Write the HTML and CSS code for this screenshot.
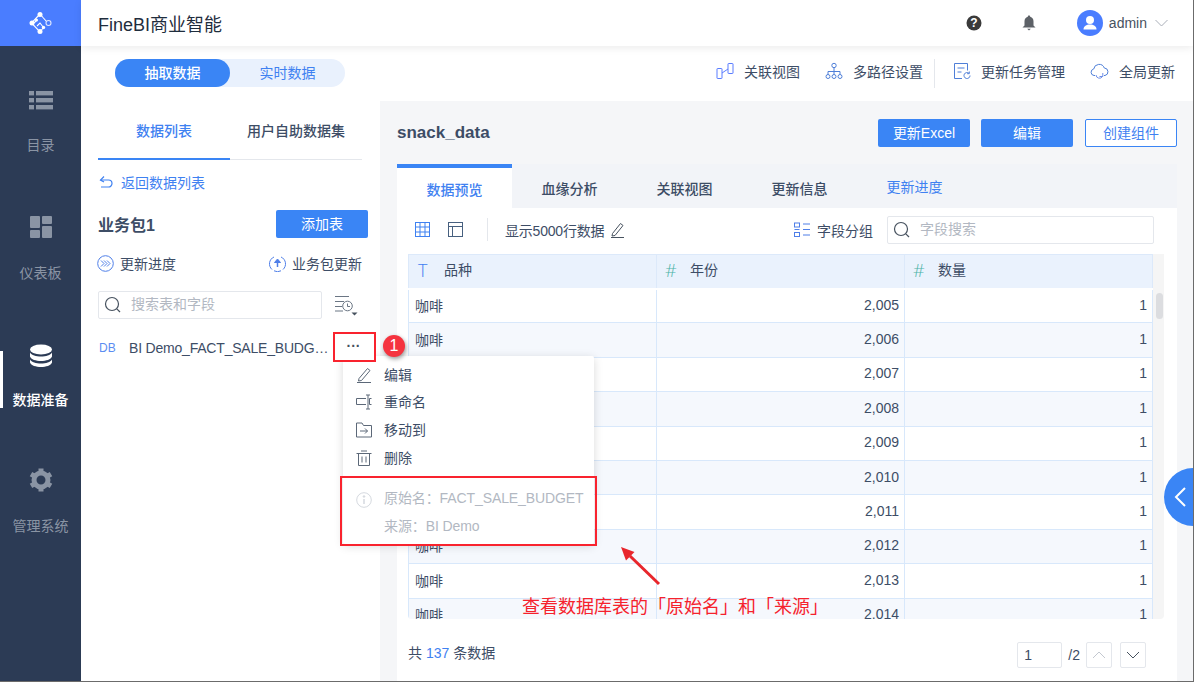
FILE: index.html
```html
<!DOCTYPE html>
<html>
<head>
  <meta charset="utf-8">
  <title>FineBI商业智能</title>
  <link rel="stylesheet" href="styles.css">
</head>
<body>
<div class="app">

  <div class="sidebar">
    <div class="logo">
      <svg width="24" height="24" viewBox="0 0 24 24" fill="none" stroke="#fff" stroke-width="1.100">
        <path d="M11 3L2.500 12 11 21l3.500-4.500M11 3l3 3.500M5 12l3-3M8 15l3-3 3.500 4.500M14 6.500l3.500 4"/>
        <g fill="#fff" stroke="none">
          <circle cx="11" cy="3.500" r="2.500"/><circle cx="3" cy="12" r="2.500"/><circle cx="11" cy="20.500" r="2.500"/>
          <circle cx="7.500" cy="9" r="1.500"/><circle cx="14.500" cy="16.500" r="1.700"/>
        </g>
        <circle cx="19.500" cy="12" r="2.500" stroke="#dfe7ff"/>
      </svg>
    </div>
    <div class="nav-item">
      <svg width="24" height="20" viewBox="0 0 24 20" fill="#8a94a4">
        <rect x="0" y="1" width="5" height="4.400"/><rect x="7" y="1" width="17" height="4.400"/>
        <rect x="0" y="8" width="5" height="4.400"/><rect x="7" y="8" width="17" height="4.400"/>
        <rect x="0" y="15" width="5" height="4.400"/><rect x="7" y="15" width="17" height="4.400"/>
      </svg>
      <span>目录</span>
    </div>
    <div class="nav-item">
      <svg width="22" height="22" viewBox="0 0 22 22" fill="#8a94a4">
        <rect x="0" y="0" width="10" height="12" rx="1"/><rect x="12" y="0" width="10" height="8" rx="1"/>
        <rect x="0" y="14" width="10" height="8" rx="1"/><rect x="12" y="10" width="10" height="12" rx="1"/>
      </svg>
      <span>仪表板</span>
    </div>
    <div class="nav-item active">
      <svg width="24" height="24" viewBox="0 0 24 24" fill="#fff">
        <ellipse cx="12" cy="5.500" rx="11" ry="5"/>
        <path d="M1 8.500c1.500 2.700 6 4 11 4s9.500-1.300 11-4v4c-1 3-6 4.500-11 4.500S2 15.500 1 12.500z"/>
        <path d="M1 15.500c1.500 2.700 6 4 11 4s9.500-1.300 11-4v3c-1 3-6 4.500-11 4.500S2 21.500 1 18.500z"/>
      </svg>
      <span>数据准备</span>
    </div>
    <div class="nav-item">
      <svg width="24" height="24" viewBox="0 0 24 24" fill="none" stroke="#8a94a4">
        <circle cx="12" cy="12" r="7" stroke-width="5"/>
        <path d="M12 0.500v4M12 19.500v4M2 6.200l3.500 2M18.500 15.800l3.500 2M2 17.800l3.500-2M18.500 8.200l3.500-2" stroke-width="5"/>
      </svg>
      <span>管理系统</span>
    </div>
  </div>

  <div class="main">
    <div class="topbar">
      <div class="brand">FineBI商业智能</div>
      <div class="top-right">
        <svg class="help" width="16" height="16" viewBox="0 0 16 16">
          <circle cx="8" cy="8" r="7.500" fill="#3a3a3a"/>
          <text x="8" y="12" class="help-mark">?</text>
        </svg>
        <svg class="bell" width="14" height="16" viewBox="0 0 14 16" fill="#5d6167">
          <path d="M7 0.500c.8 0 1.200.5 1.200 1.200C10.500 2.300 11.500 4 11.500 6.500v4l2 2H.5l2-2v-4C2.500 4 3.500 2.300 5.800 1.700 5.800 1 6.200.5 7 .5z"/>
          <path d="M5.200 13.800h3.600L7 15.500z"/>
        </svg>
        <svg class="avatar" width="26" height="26" viewBox="0 0 26 26">
          <circle cx="13" cy="13" r="13" fill="#4a7dff"/>
          <circle cx="13" cy="10" r="4" fill="#fff"/>
          <path d="M6.500 19.500c0-3.500 3-5 6.500-5s6.500 1.500 6.500 5z" fill="#fff"/>
        </svg>
        <span class="user-name">admin</span>
        <svg class="user-caret" width="13" height="8" viewBox="0 0 13 8" fill="none" stroke="#a9aeb8"><path d="M.5 1l6 6 6-6"/></svg>
      </div>
    </div>

    <div class="subbar">
      <div class="switch">
        <div class="switch-on">抽取数据</div>
        <div class="switch-off">实时数据</div>
      </div>
      <div class="actions">
        <div class="action a-view">
          <svg width="18" height="18" viewBox="0 0 18 18" fill="none" stroke="#5a7dff">
            <rect x="1" y="6.500" width="5" height="10" rx=".5"/><rect x="12" y="1.500" width="5" height="10" rx=".5"/><path d="M6 11L12 7"/>
          </svg>
          <span>关联视图</span>
        </div>
        <div class="action a-path">
          <svg width="18" height="18" viewBox="0 0 18 18" fill="none" stroke="#4f7fd8">
            <circle cx="9" cy="3.500" r="2.200"/><circle cx="3" cy="14.500" r="2"/><circle cx="9" cy="14.500" r="2"/><circle cx="15" cy="14.500" r="2"/>
            <path d="M9 5.700v6.800M3 12.500V9.500h12v3"/>
          </svg>
          <span>多路径设置</span>
        </div>
        <div class="action-sep"></div>
        <div class="action a-task">
          <svg width="18" height="18" viewBox="0 0 18 18" fill="none" stroke="#4f7fd8">
            <path d="M9 16.500H1.500v-15h13v7"/><path d="M4.500 6h7M4.500 10h4"/>
            <path d="M17 13.500a3 3 0 1 1-1-2.200M16.300 9.500v2.200h-2.200"/>
          </svg>
          <span>更新任务管理</span>
        </div>
        <div class="action a-cloud">
          <svg width="19" height="18" viewBox="0 0 19 18" fill="none" stroke="#4f7fd8">
            <path d="M5 13.500H4A3.300 3.300 0 0 1 3.700 7 5.500 5.500 0 0 1 14.300 6 3.800 3.800 0 0 1 15 13.500h-1"/>
            <path d="M6 13a3.500 3.500 0 0 0 6.500 1.500M12.800 11v3.500H9.500" stroke="#6f8fe8"/>
          </svg>
          <span>全局更新</span>
        </div>
      </div>
    </div>

    <div class="content">
      <div class="left">
        <div class="left-tabs">
          <div class="left-tab on">数据列表</div>
          <div class="left-tab">用户自助数据集</div>
        </div>
        <div class="back">
          <svg width="16" height="14" viewBox="0 0 16 14" fill="none" stroke="#3f81f1" stroke-width="1.200">
            <path d="M2.500 5h8a3.500 3.500 0 0 1 0 7H3"/><path d="M6 1.500L2.500 5 6 7" />
          </svg>
          <span>返回数据列表</span>
        </div>
        <div class="pack-head">
          <span class="pack-name">业务包1</span>
          <div class="btn btn-add">添加表</div>
        </div>
        <div class="pack-links">
          <div class="pack-link">
            <svg width="17" height="17" viewBox="0 0 17 17" fill="none" stroke="#4f7fe8">
              <circle cx="8.500" cy="8.500" r="7.800"/><path d="M4 5.500l3 3-3 3M7 5.500l3 3-3 3M10 5.500l3 3-3 3"/>
            </svg>
            <span>更新进度</span>
          </div>
          <div class="pack-link">
            <svg width="17" height="17" viewBox="0 0 17 17" fill="none" stroke="#4f7fe8">
              <path d="M5 2A7.500 7.500 0 0 0 3 14.500M12 2a7.500 7.500 0 0 1 2 12.500M5 15.800a7.500 7.500 0 0 0 7 0"/>
              <path d="M8.500 12V5" stroke-width="1.500"/><path d="M5.500 7.500L8.500 4l3 3.500z" fill="#4f7fe8"/>
            </svg>
            <span>业务包更新</span>
          </div>
        </div>
        <div class="search-row">
          <div class="search search-left">
            <svg width="18" height="18" viewBox="0 0 18 18" fill="none" stroke="#47525f" stroke-width="1.200">
              <circle cx="8" cy="8" r="6.500"/><path d="M12.800 12.800L16 16"/>
            </svg>
            <span>搜索表和字段</span>
          </div>
          <svg class="sort" width="24" height="24" viewBox="0 0 24 24" fill="none" stroke="#6b7684">
            <path d="M1 3.500h14M1 8.500h9M1 13.500h7M1 18h8"/>
            <circle cx="13.500" cy="13" r="4.800"/><path d="M13.500 10.500V13.500h2.500"/>
            <path d="M17.500 19.500h6l-3 3z" fill="#47525f" stroke="none"/>
          </svg>
        </div>
        <div class="table-item">
          <span class="db-tag">DB</span>
          <span class="table-name">BI Demo_FACT_SALE_BUDGET</span>
        </div>
      </div>

      <div class="right">
        <div class="right-head">
          <div class="ds-name">snack_data</div>
          <div class="right-btns">
            <div class="btn">更新Excel</div>
            <div class="btn">编辑</div>
            <div class="btn btn-line">创建组件</div>
          </div>
        </div>
        <div class="card">
          <div class="tabs">
            <div class="tab on">数据预览</div>
            <div class="tab">血缘分析</div>
            <div class="tab">关联视图</div>
            <div class="tab">更新信息</div>
            <div class="tab plain">更新进度</div>
          </div>
          <div class="toolbar">
            <svg class="tool-grid" width="15" height="15" viewBox="0 0 15 15" fill="none" stroke="#3f81f1">
              <rect x=".5" y=".5" width="14" height="14"/><path d="M.5 5h14M.5 10h14M5 .5v14M10 .5v14"/>
            </svg>
            <svg class="tool-layout" width="15" height="15" viewBox="0 0 15 15" fill="none" stroke="#47607f">
              <rect x=".5" y=".5" width="14" height="14"/><path d="M.5 4.500h14M4.500 4.500v10"/>
            </svg>
            <div class="tool-sep"></div>
            <span class="tool-text">显示5000行数据</span>
            <svg class="tool-pen" width="15" height="16" viewBox="0 0 15 16" fill="none" stroke="#47525f">
              <path d="M2.500 11.500L10.500 1.500l2.500 2-8 10-3 .5zM1 15.500h13"/>
            </svg>
            <div class="tool-right">
              <svg width="16" height="16" viewBox="0 0 16 16" fill="none" stroke="#4f7fe8">
                <rect x=".5" y="1" width="5" height="4"/><rect x=".5" y="10.500" width="5" height="4"/>
                <path d="M9 2h7M9 7.500h7M9 13h7M.5 7.500h5"/>
              </svg>
              <span>字段分组</span>
              <div class="search search-field">
                <svg width="18" height="18" viewBox="0 0 18 18" fill="none" stroke="#47525f" stroke-width="1.200">
                  <circle cx="8" cy="8" r="6.500"/><path d="M12.800 12.800L16 16"/>
                </svg>
                <span>字段搜索</span>
              </div>
            </div>
          </div>

          <div class="table-wrap">
            <table class="data">
              <thead>
                <tr>
                  <th><i class="type t-text">T</i>品种</th>
                  <th><i class="type t-num">#</i>年份</th>
                  <th><i class="type t-num">#</i>数量</th>
                </tr>
              </thead>
              <tbody>
                <tr><td>咖啡</td><td class="num">2,005</td><td class="num">1</td></tr>
                <tr><td>咖啡</td><td class="num">2,006</td><td class="num">1</td></tr>
                <tr><td>咖啡</td><td class="num">2,007</td><td class="num">1</td></tr>
                <tr><td>咖啡</td><td class="num">2,008</td><td class="num">1</td></tr>
                <tr><td>咖啡</td><td class="num">2,009</td><td class="num">1</td></tr>
                <tr><td>咖啡</td><td class="num">2,010</td><td class="num">1</td></tr>
                <tr><td>咖啡</td><td class="num">2,011</td><td class="num">1</td></tr>
                <tr><td>咖啡</td><td class="num">2,012</td><td class="num">1</td></tr>
                <tr><td>咖啡</td><td class="num">2,013</td><td class="num">1</td></tr>
                <tr><td>咖啡</td><td class="num">2,014</td><td class="num">1</td></tr>
              </tbody>
            </table>
            <div class="scroll"><div class="thumb"></div></div>
          </div>

          <div class="foot">
            <span class="foot-count">共 <b>137</b> 条数据</span>
            <div class="pager">
              <div class="page-input">1</div>
              <span class="page-total">/2</span>
              <div class="page-btn">
                <svg width="14" height="8" viewBox="0 0 14 8" fill="none" stroke="#c3c8d0"><path d="M1 7l6-6 6 6"/></svg>
              </div>
              <div class="page-btn">
                <svg width="14" height="8" viewBox="0 0 14 8" fill="none" stroke="#47525f"><path d="M1 1l6 6 6-6"/></svg>
              </div>
            </div>
          </div>
        </div>
      </div>
    </div>
  </div>

  <!-- popup menu -->
  <div class="menu">
    <div class="menu-item">
      <svg width="16" height="16" viewBox="0 0 16 16" fill="none" stroke="#5c6878"><path d="M3 11.500L11.500 1.500l2.500 2-8.500 10-3 .5zM1 15.500h14"/></svg>
      <span>编辑</span>
    </div>
    <div class="menu-item">
      <svg width="16" height="16" viewBox="0 0 16 16" fill="none" stroke="#5c6878"><path d="M10 4.500H.5v6H10M15.500 4.500h-2v6h2M12 1v14M10 1h4M10 15h4"/></svg>
      <span>重命名</span>
    </div>
    <div class="menu-item">
      <svg width="16" height="16" viewBox="0 0 16 16" fill="none" stroke="#5c6878"><path d="M.5 1h5.500l1.500 2.500h8v11.500H.5zM4 9h7.500M9 6.500L11.500 9 9 11.500"/></svg>
      <span>移动到</span>
    </div>
    <div class="menu-item">
      <svg width="16" height="16" viewBox="0 0 16 16" fill="none" stroke="#5c6878"><path d="M.5 3.500h15M5 1h6M2.500 3.500v12h11v-12M6 6.500v6M10 6.500v6"/></svg>
      <span>删除</span>
    </div>
    <div class="menu-info">
      <svg width="16" height="16" viewBox="0 0 16 16" fill="none" stroke="#d5d9df"><circle cx="8" cy="8" r="7.300"/><path d="M8 7v5" stroke-width="1.500"/><circle cx="8" cy="4.500" r=".8" fill="#d5d9df"/></svg>
      <div class="info-lines">
        <div>原始名：FACT_SALE_BUDGET</div>
        <div>来源：BI Demo</div>
      </div>
    </div>
  </div>

  <!-- annotations drawn on top of the screenshot -->
  <div class="mark mark-more"><span class="dots">···</span></div>
  <div class="badge">1</div>
  <div class="mark mark-info"></div>
  <svg class="arrow" width="50" height="50" viewBox="0 0 50 50">
    <path d="M14 16 L43 44" stroke="#e8262c" stroke-width="3"/>
    <path d="M5 7 L10 20.500 L18.500 12z" fill="#e8262c"/>
  </svg>
  <div class="note">查看数据库表的「原始名」和「来源」</div>
  <div class="collapse">
    <svg width="14" height="22" viewBox="0 0 14 22" fill="none" stroke="#fff" stroke-width="2"><path d="M12 2L3 11l9 9"/></svg>
  </div>
</div>
</body>
</html>
```

FILE: styles.css
```css
* {
  box-sizing: border-box;
}
html, body {
  margin: 0;
  padding: 0;
}
body {
  font-family: "Liberation Sans", "Noto Sans CJK SC", sans-serif;
  font-size: 14px;
  color: #3d4d66;
  background: #fff;
}
.app {
  position: relative;
  display: flex;
  width: 1194px;
  height: 682px;
  overflow: hidden;
  border-right: 1px solid #6b6b6b;
  border-bottom: 1px solid #6b6b6b;
}

/* sidebar */
.sidebar {
  width: 81px;
  flex: none;
  background: #2c3b55;
}
.logo {
  height: 46px;
  margin-bottom: 13px;
  background: #4a7dff;
  display: flex;
  align-items: center;
  justify-content: center;
}
.nav-item {
  height: 127px;
  display: flex;
  flex-direction: column;
  align-items: center;
  justify-content: center;
  gap: 25px;
  color: #8a94a4;
  position: relative;
}
.nav-item:last-child {
  gap: 24px;
  padding-bottom: 3px;
}
.nav-item span {
  line-height: 20px;
}
.nav-item.active {
  gap: 22px;
  color: #fff;
  font-weight: 500;
}
.nav-item.active::before {
  content: "";
  position: absolute;
  left: 0;
  top: 38px;
  width: 3px;
  height: 57px;
  background: #fff;
}

/* header */
.main {
  flex: 1;
  min-width: 0;
  display: flex;
  flex-direction: column;
}
.topbar {
  height: 46px;
  flex: none;
  display: flex;
  align-items: center;
  justify-content: space-between;
  padding: 0 25px 0 17px;
  box-shadow: 0 2px 8px rgba(0,0,0,0.08);
  position: relative;
}
.brand {
  font-size: 18px;
  color: #1f2d3d;
}
.top-right {
  display: flex;
  align-items: center;
}
.bell {
  margin-left: 40px;
}
.avatar {
  margin-left: 41px;
}
.help-mark {
  font-size: 12px;
  font-weight: bold;
  fill: #fff;
  text-anchor: middle;
}
.user-name {
  margin-left: 6px;
  font-size: 14px;
  color: #47525f;
}
.user-caret {
  margin-left: 8px;
}

/* second bar */
.subbar {
  height: 55px;
  flex: none;
  display: flex;
  align-items: center;
  justify-content: space-between;
  padding: 0 18px 0 34px;
}
.switch {
  width: 230px;
  height: 28px;
  margin-top: -1px;
  display: flex;
  border-radius: 14px;
  background: #e9f1fd;
  line-height: 28px;
  text-align: center;
}
.switch-on {
  width: 115px;
  border-radius: 14px;
  background: #3a85f5;
  color: #fff;
  font-weight: 500;
}
.switch-off {
  flex: 1;
  color: #3f81f1;
}
.actions {
  display: flex;
  align-items: center;
  color: #3d4d66;
}
.action {
  display: flex;
  align-items: center;
  gap: 10px;
  margin-bottom: 6px;
}
.action.a-path {
  margin-left: 25px;
}
.action.a-task {
  margin-left: 18px;
}
.action.a-cloud {
  margin-left: 25px;
}
.action-sep {
  width: 1px;
  height: 29px;
  margin-left: 11px;
  background: #e4e7ec;
}

/* content */
.content {
  flex: 1;
  min-height: 0;
  display: flex;
}
.left {
  width: 299px;
  flex: none;
  padding: 14px 12px 0 17px;
}
.left-tabs {
  width: 264px;
  height: 45px;
  display: flex;
  border-bottom: 1px solid #e4e7ec;
}
.left-tab {
  width: 132px;
  height: 45px;
  line-height: 32px;
  text-align: center;
  font-weight: 500;
  color: #3d4d66;
  white-space: nowrap;
}
.left-tab.on {
  color: #3f81f1;
  border-bottom: 2px solid #3a85f5;
}
.back {
  margin-top: 12px;
  height: 20px;
  display: flex;
  align-items: center;
  gap: 7px;
  color: #3f81f1;
}
.pack-head {
  margin-top: 18px;
  display: flex;
  align-items: center;
  justify-content: space-between;
}
.pack-name {
  font-size: 16px;
  font-weight: bold;
  color: #3d4d66;
}
.btn {
  width: 92px;
  height: 28px;
  line-height: 28px;
  text-align: center;
  background: #3a85f5;
  color: #fff;
  border-radius: 2px;
}
.btn-line {
  margin-left: 1px;
  background: #fff;
  color: #3f81f1;
  border: 1px solid #3a85f5;
  line-height: 26px;
}
.pack-links {
  width: 265px;
  margin-top: 15px;
  margin-left: -1px;
  height: 20px;
  display: flex;
  align-items: center;
  justify-content: space-between;
}
.pack-link {
  display: flex;
  align-items: center;
  gap: 6px;
}
.search-row {
  margin-top: 18px;
  display: flex;
  align-items: center;
}
.search {
  display: flex;
  align-items: center;
  height: 28px;
  background: #fff;
  border: 1px solid #e4e7ec;
  border-radius: 2px;
  padding-left: 5px;
  gap: 9px;
  color: #b2b8c2;
}
.search span {
  margin-top: -4px;
}
.search-left {
  width: 224px;
}
.sort {
  margin-left: 12px;
}
.table-item {
  margin-top: 19px;
  margin-left: 1px;
  width: 230px;
  height: 20px;
  display: flex;
  align-items: center;
}
.db-tag {
  width: 30px;
  flex: none;
  font-size: 12px;
  color: #5b8df2;
}
.table-name {
  white-space: nowrap;
  overflow: hidden;
  text-overflow: ellipsis;
  width: 200px;
  letter-spacing: -0.2px;
}

/* right side */
.right {
  flex: 1;
  min-width: 0;
  display: flex;
  flex-direction: column;
  padding: 0 16px 0 17px;
  background: #f5f6f8;
}
.right-head {
  height: 63px;
  flex: none;
  display: flex;
  align-items: center;
  justify-content: space-between;
  padding-top: 1px;
}
.ds-name {
  font-size: 17px;
  font-weight: bold;
  color: #3d4d66;
}
.right-btns {
  display: flex;
  gap: 11px;
}
.card {
  flex: 1;
  min-height: 0;
  display: flex;
  flex-direction: column;
  background: #fff;
}
.tabs {
  height: 44px;
  flex: none;
  display: flex;
  background: #f2f4f8;
}
.tab {
  width: 115px;
  line-height: 50px;
  text-align: center;
  font-weight: 500;
  color: #3d4d66;
}
.tab.on {
  background: #fff;
  color: #3f81f1;
  border-top: 4px solid #3a85f5;
  line-height: 44px;
}
.tab.plain {
  color: #3f81f1;
  font-weight: 400;
  line-height: 46px;
}
.toolbar {
  height: 46px;
  flex: none;
  display: flex;
  align-items: center;
  padding: 0 23px 3px 18px;
}
.tool-layout {
  margin-left: 18px;
}
.tool-sep {
  width: 1px;
  height: 23px;
  margin: 0 17px 0 24px;
  background: #e4e7ec;
}
.tool-text {
  letter-spacing: -0.2px;
}
.tool-pen {
  margin-left: 6px;
}
.tool-right {
  margin-left: auto;
  display: flex;
  align-items: center;
  gap: 7px;
}
.search-field {
  width: 267px;
  margin-left: 7px;
}

/* table */
.table-wrap {
  margin: 0 13px 0 11px;
  height: 365px;
  flex: none;
  overflow: hidden;
  position: relative;
  background: #f5f5f5;
  border-radius: 0 0 4px 4px;
}
.data {
  width: 745px;
  table-layout: fixed;
  border-collapse: collapse;
  background: #fff;
}
.data th {
  height: 34px;
  background: #eaf2fd;
  text-align: left;
  font-weight: 400;
  padding: 0 0 6px 8px;
  border: 1px solid #dce9fa;
  border-bottom: 2px solid #fff;
}
.data td {
  height: 34.400px;
  padding: 0 5px 2px 6px;
  border: 1px solid #d8e8fb;
  white-space: nowrap;
}
.data tbody tr:nth-child(even) td {
  background: #f5f8fd;
}
.num {
  text-align: right;
}
.type {
  display: inline-block;
  width: 25px;
  font-family: "Open Sans", sans-serif;
  font-style: normal;
  font-weight: 300;
  font-size: 18px;
  position: relative;
  top: 2px;
}
.t-text {
  width: 26px;
  margin-left: 1px;
  color: #3f81f1;
}
.t-num {
  color: #4cb3a8;
}
.scroll {
  position: absolute;
  left: 745px;
  top: 35px;
  bottom: 0;
  width: 12px;
}
.thumb {
  width: 7px;
  height: 26px;
  margin: 4px 0 0 3px;
  border-radius: 4px;
  background: #dcdde0;
}
.foot {
  flex: 1;
  display: flex;
  align-items: center;
  justify-content: space-between;
  padding: 9px 31px 0 11px;
}
.foot-count {
  margin-bottom: 6px;
}
.foot b {
  font-weight: 400;
  color: #3f81f1;
}
.pager {
  display: flex;
  align-items: center;
}
.page-input {
  width: 45px;
  height: 26px;
  line-height: 24px;
  padding-left: 6px;
  border: 1px solid #e4e7ec;
  border-radius: 2px;
}
.page-total {
  margin: 0 6px;
}
.page-btn {
  width: 26px;
  height: 26px;
  margin-right: 8px;
  display: flex;
  align-items: center;
  justify-content: center;
  border: 1px solid #e4e7ec;
  border-radius: 2px;
}
.page-btn:last-child {
  margin-right: 0;
}

/* menu + overlays */
.menu {
  position: absolute;
  left: 343px;
  top: 356px;
  width: 251px;
  height: 188px;
  padding-top: 5px;
  background: #fff;
  border-radius: 2px;
  box-shadow: 0 2px 10px rgba(0,0,0,0.15);
}
.menu-item {
  height: 27.600px;
  display: flex;
  align-items: center;
  gap: 12px;
  padding-left: 13px;
}
.menu-item span {
  margin-top: -2px;
}
.menu-info {
  display: flex;
  gap: 12px;
  padding: 13px 0 0 13px;
  color: #b2b8c2;
}
.menu-info svg {
  margin-top: 8px;
}
.info-lines {
  line-height: 28px;
  white-space: nowrap;
  letter-spacing: -0.1px;
}
.mark {
  position: absolute;
  border: 2px solid #f9232e;
}
.mark-more {
  left: 333px;
  top: 332px;
  width: 43px;
  height: 30px;
  padding-right: 2px;
  text-align: center;
  line-height: 24px;
  color: #47525f;
  background: #fff;
}
.dots {
  font-weight: bold;
}
.mark-info {
  left: 340px;
  top: 476px;
  width: 257px;
  height: 70px;
}
.badge {
  position: absolute;
  left: 383px;
  top: 335px;
  width: 22px;
  height: 22px;
  border-radius: 50%;
  background: #f5333f;
  color: #fff;
  font-size: 16px;
  line-height: 22px;
  text-align: center;
  box-shadow: 1px 2px 4px rgba(0,0,0,0.4);
}
.arrow {
  position: absolute;
  left: 616px;
  top: 540px;
}
.note {
  position: absolute;
  left: 522px;
  top: 594px;
  font-size: 18px;
  line-height: 26px;
  color: #f5222d;
  white-space: nowrap;
}
.collapse {
  position: absolute;
  left: 1164px;
  top: 468px;
  width: 58px;
  height: 58px;
  border-radius: 50%;
  background: #3a85f5;
  padding: 18px 0 0 9px;
}
```
